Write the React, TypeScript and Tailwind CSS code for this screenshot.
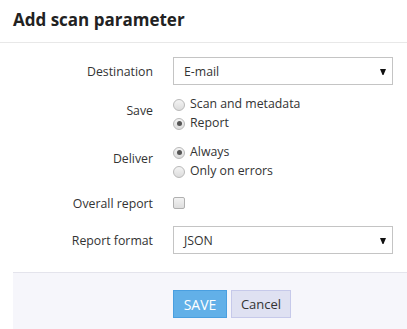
import type { ReactNode } from "react";

function Radio({ checked, label }: { checked?: boolean; label: string }) {
  return (
    <div className="flex h-[19px] items-center gap-[5px]">
      <span className="flex h-[12px] w-[12px] items-center justify-center rounded-full border border-[#b9b9b9] bg-gradient-to-b from-[#f4f4f4] to-[#dcdcdc]">
        {checked && <span className="h-[5px] w-[5px] rounded-full bg-[#555]" />}
      </span>
      <span>{label}</span>
    </div>
  );
}

function Select({ value }: { value: string }) {
  return (
    <div className="flex h-[28px] w-[220px] items-center justify-between border border-[#c4c4c4] bg-white pl-[10px] pr-[6px] pt-[2px]">
      <span>{value}</span>
      <svg width="6" height="6" viewBox="0 0 6 6" className="mb-[1px]">
        <polygon points="0,0 6,0 3.5,6 2.5,6" fill="#111" />
      </svg>
    </div>
  );
}

function Row({ label, labelPad = "", children, className = "" }: { label: string; labelPad?: string; children: ReactNode; className?: string }) {
  return (
    <div className={`flex ${className}`}>
      <div className={`w-[140px] shrink-0 text-right ${labelPad}`}>{label}</div>
      <div className="ml-[20px]">{children}</div>
    </div>
  );
}

export default function App() {
  return (
    <div className="h-[329px] w-[407px] bg-white text-[12.3px] text-[#333] font-['Open_Sans',sans-serif]">
      {/* Header */}
      <div className="h-[43px] border-b border-[#e8e8e8] px-[13px] pt-[7px]">
        <h1 className="text-[17px] font-bold text-[#222]">Add scan parameter</h1>
      </div>

      {/* Form */}
      <div className="pl-[13px] pt-[14px]">
        <Row label="Destination" labelPad="self-center pt-[2px]">
          <Select value="E-mail" />
        </Row>

        <Row label="Save" labelPad="pt-[7px]" className="mt-[10px]">
          <Radio label="Scan and metadata" />
          <Radio checked label="Report" />
        </Row>

        <Row label="Deliver" labelPad="pt-[7px]" className="mt-[10px]">
          <Radio checked label="Always" />
          <Radio label="Only on errors" />
        </Row>

        <Row label="Overall report" labelPad="self-center pt-[2px]" className="mt-[12px]">
          <div className="flex h-[20px] items-center">
            <span className="h-[12px] w-[12px] rounded-[2px] border border-[#b0b0b0] bg-gradient-to-b from-[#f2f2f2] to-[#dedede]" />
          </div>
        </Row>

        <Row label="Report format" labelPad="self-center pt-[2px]" className="mt-[13px]">
          <Select value="JSON" />
        </Row>
      </div>

      {/* Footer */}
      <div className="ml-[13px] mt-[18px] flex h-[57px] gap-[4px] border-t border-[#e4e4ec] bg-[#f6f6fb] pl-[160px] pt-[17px]">
        <button className="h-[28px] w-[54px] border border-[#4a9fe0] bg-[#62b0e8] text-[14px] text-white">
          SAVE
        </button>
        <button className="h-[28px] w-[60px] border border-[#c6c9ea] bg-[#dfe1f2] text-[13px] text-[#333]">
          Cancel
        </button>
      </div>
    </div>
  );
}
